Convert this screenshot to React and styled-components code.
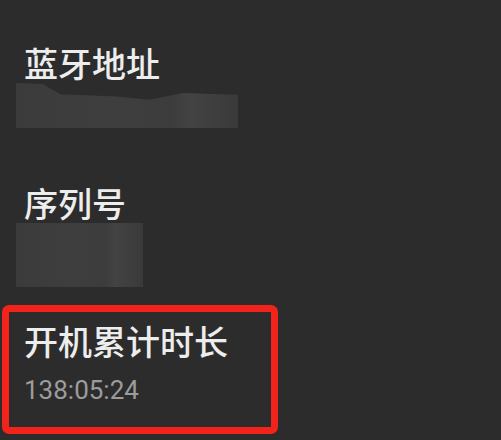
import React from 'react';
import styled, { createGlobalStyle } from 'styled-components';

const GlobalStyle = createGlobalStyle`
    html, body {
        margin: 0;
        padding: 0;
        background: #2c2c2c;
    }
    body {
        font-family: "Noto Sans CJK SC", "Noto Sans", sans-serif;
    }
`

export default function App() {
    return (
        <>
            <GlobalStyle />
            <Page>
                <Item>
                    <Title>蓝牙地址</Title>
                    <Masked width={222} height={45} wave />
                </Item>
                <Item gap={55}>
                    <Title>序列号</Title>
                    <Masked width={127} height={64} />
                </Item>
                <Highlight>
                    <Title>开机累计时长</Title>
                    <Value>138:05:24</Value>
                </Highlight>
            </Page>
        </>
    );
}

const Page = styled.div`
    display: flex;
    flex-direction: column;
    align-items: flex-start;
    width: 501px;
    height: 440px;
    padding-top: 43px;
    box-sizing: border-box;
    overflow: hidden;
`

const Item = styled.div`
    display: flex;
    flex-direction: column;
    align-items: flex-start;
    padding-left: 16px;
    margin-top: ${p => p.gap || 0}px;
`

const Title = styled.div`
    font-size: 34px;
    font-weight: 500;
    line-height: 40px;
    color: #ededed;
    padding-left: 8px;
`

const Masked = styled.div`
    width: ${p => p.width}px;
    height: ${p => p.height}px;
    background: linear-gradient(90deg, #3b3b3b 0%, #3e3e3e 45%, #3c3c3c 70%, #434343 78%, #3a3a3a 100%);
    filter: blur(0.6px);
    clip-path: ${p => p.wave
        ? 'polygon(0 0, 12% 2%, 20% 25%, 45% 30%, 60% 37%, 75% 22%, 100% 26%, 100% 100%, 0 100%)'
        : 'none'};
`

const Highlight = styled.div`
    display: flex;
    flex-direction: column;
    align-items: flex-start;
    margin-top: 18px;
    margin-left: 2px;
    width: 276px;
    box-sizing: border-box;
    border: 7px solid #f2231b;
    border-radius: 7px;
    padding: 9px 0 22px 7px;
`

const Value = styled.div`
    font-family: Roboto, "Liberation Sans", sans-serif;
    font-size: 26px;
    line-height: 30px;
    color: #9c9c9c;
    padding-left: 8px;
    margin-top: 14px;
`
